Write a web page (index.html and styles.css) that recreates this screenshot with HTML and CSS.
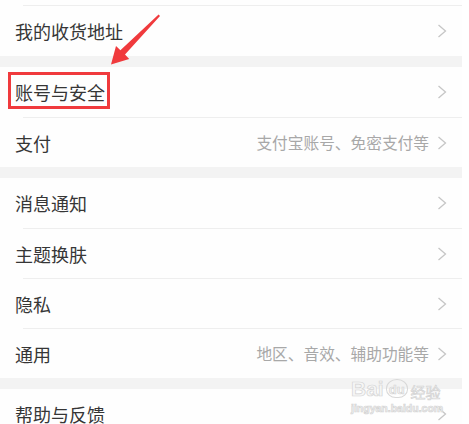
FILE: index.html
```html
<!DOCTYPE html>
<html lang="zh-CN">

<head>
  <meta charset="UTF-8">
  <meta name="viewport" content="width=device-width, initial-scale=1.0">
  <title>设置</title>
  <link rel="stylesheet" href="styles.css">
</head>

<body>
  <div class="page">
    <div class="settings">
      <div class="group">
        <div class="row-stub"></div>
        <div class="row">
          <span class="label">我的收货地址</span>
          <span class="extra"></span>
          <svg class="chevron" viewBox="0 0 10 14"><polyline points="1.5,1 8.5,7 1.5,13" /></svg>
        </div>
      </div>
      <div class="group">
        <div class="row">
          <span class="label">账号与安全</span>
          <span class="extra"></span>
          <svg class="chevron" viewBox="0 0 10 14"><polyline points="1.5,1 8.5,7 1.5,13" /></svg>
        </div>
        <div class="row">
          <span class="label">支付</span>
          <span class="extra">支付宝账号、免密支付等</span>
          <svg class="chevron" viewBox="0 0 10 14"><polyline points="1.5,1 8.5,7 1.5,13" /></svg>
        </div>
      </div>
      <div class="group">
        <div class="row">
          <span class="label">消息通知</span>
          <span class="extra"></span>
          <svg class="chevron" viewBox="0 0 10 14"><polyline points="1.5,1 8.5,7 1.5,13" /></svg>
        </div>
        <div class="row">
          <span class="label">主题换肤</span>
          <span class="extra"></span>
          <svg class="chevron" viewBox="0 0 10 14"><polyline points="1.5,1 8.5,7 1.5,13" /></svg>
        </div>
        <div class="row">
          <span class="label">隐私</span>
          <span class="extra"></span>
          <svg class="chevron" viewBox="0 0 10 14"><polyline points="1.5,1 8.5,7 1.5,13" /></svg>
        </div>
        <div class="row">
          <span class="label">通用</span>
          <span class="extra">地区、音效、辅助功能等</span>
          <svg class="chevron" viewBox="0 0 10 14"><polyline points="1.5,1 8.5,7 1.5,13" /></svg>
        </div>
      </div>
      <div class="group">
        <div class="row">
          <span class="label">帮助与反馈</span>
          <span class="extra"></span>
          <svg class="chevron" viewBox="0 0 10 14"><polyline points="1.5,1 8.5,7 1.5,13" /></svg>
        </div>
      </div>
    </div>

    <!-- 标注：红框和箭头 -->
    <svg class="annot" viewBox="0 0 469 424">
      <rect x="9.5" y="73.5" width="99" height="34" fill="none" stroke="#f03a3d" stroke-width="3" />
      <polygon fill="#f03a3d"
        points="160,16 125,54.6 129.2,58.9 111,64.5 116,46 120.4,50.3 158.6,14.6" />
    </svg>

    <!-- 水印 -->
    <div class="watermark">
      <div class="wm-logo">
        <span>Bai</span><span class="wm-paw">du</span><span class="wm-cn">经验</span>
      </div>
      <div class="wm-url">jingyan.baidu.com</div>
    </div>
  </div>
</body>

</html>
```

FILE: styles.css
```css
* {
  box-sizing: border-box;
}

body {
  margin: 0;
  background: #fff;
  font-family: "Noto Sans CJK SC", "Noto Sans", sans-serif;
}

.page {
  position: relative;
  width: 469px;
  height: 424px;
  overflow: hidden;
}

.settings {
  width: 462px;
  background: #f3f3f3;
  display: flex;
  flex-direction: column;
  gap: 11px;
}

.group {
  background: #fefefe;
}

.row-stub {
  height: 6px;
  border-bottom: 1px solid #eeeeee;
  margin-left: 23px;
}

.row {
  height: 50px;
  display: flex;
  align-items: center;
  padding: 0 15px;
}

.row + .row {
  background: linear-gradient(#eeeeee, #eeeeee) no-repeat 23px 0 / calc(100% - 23px) 1px;
  padding-top: 1px;
}

.label {
  font-size: 18px;
  color: #363636;
  line-height: 1;
}

.extra {
  flex: 1;
  text-align: right;
  font-size: 15.7px;
  color: #a8a8a8;
  margin-right: 8px;
  line-height: 1;
}

.chevron {
  width: 10px;
  height: 14px;
  fill: none;
  stroke: #c6c6c6;
  stroke-width: 1.3;
}

.annot {
  position: absolute;
  left: 0;
  top: 0;
  width: 469px;
  height: 424px;
  pointer-events: none;
}

.watermark {
  position: absolute;
  left: 351px;
  top: 368px;
  width: 92px;
  color: #f6f6f6;
  -webkit-text-stroke: 0.7px #d4d4d4;
  pointer-events: none;
}

.wm-logo {
  display: flex;
  align-items: flex-end;
  font-family: "Liberation Sans", sans-serif;
  font-weight: bold;
  font-size: 21px;
  line-height: 1;
  height: 31px;
}

.wm-paw {
  font-size: 13px;
  border: 1px solid #d8d8d8;
  border-radius: 50% 50% 45% 45%;
  padding: 3px 2px 1px;
  margin: 0 3px 1px 2px;
}

.wm-cn {
  font-family: "Noto Sans CJK SC", sans-serif;
  font-size: 15px;
  font-weight: normal;
}

.wm-url {
  font-family: "Liberation Sans", sans-serif;
  font-size: 10.5px;
  font-weight: bold;
  margin-top: 3px;
}
```
